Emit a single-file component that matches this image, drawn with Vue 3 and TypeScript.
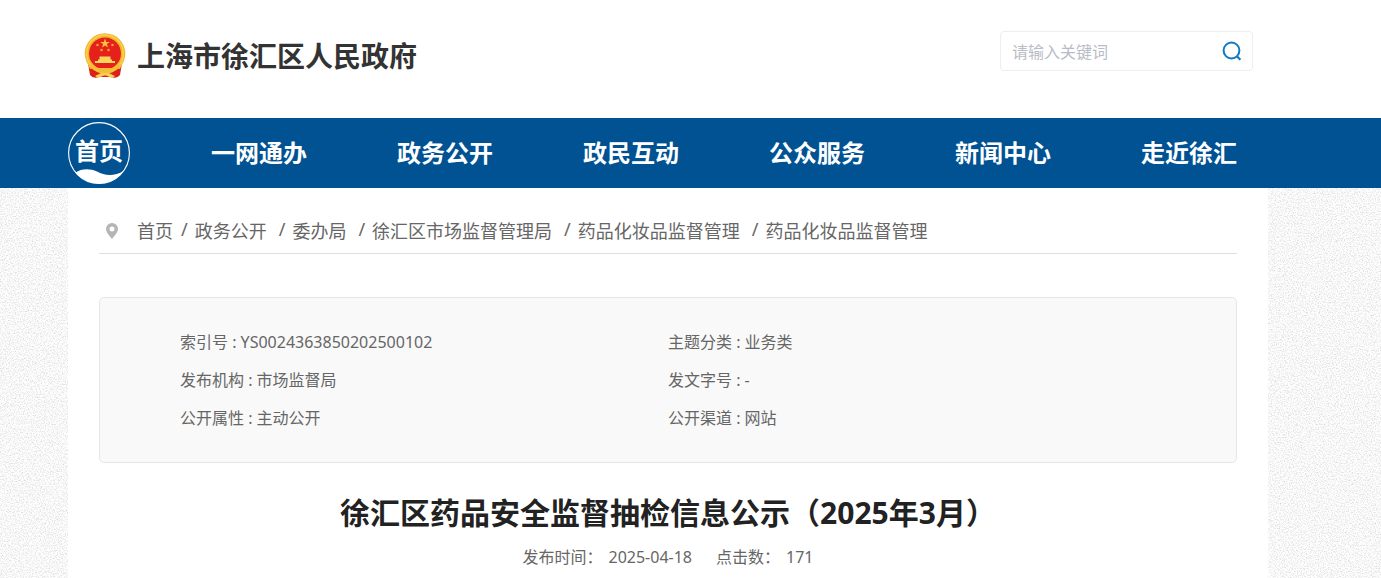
<script setup lang="ts">
import { ref } from 'vue'

interface InfoItem {
  label: string
  value: string
}

const keyword = ref('')

const navItems: string[] = ['一网通办', '政务公开', '政民互动', '公众服务', '新闻中心', '走近徐汇']

const crumbs: string[] = [
  '首页',
  '政务公开',
  '委办局',
  '徐汇区市场监督管理局',
  '药品化妆品监督管理',
  '药品化妆品监督管理',
]

const infoItems: InfoItem[] = [
  { label: '索引号', value: 'YS0024363850202500102' },
  { label: '主题分类', value: '业务类' },
  { label: '发布机构', value: '市场监督局' },
  { label: '发文字号', value: '-' },
  { label: '公开属性', value: '主动公开' },
  { label: '公开渠道', value: '网站' },
]
</script>

<template>
  <div class="page">
    <header class="header">
      <div class="container header-inner">
        <a class="brand" href="#">
          <svg class="emblem" viewBox="0 0 42 46" aria-hidden="true">
            <path d="M4 30 L6 42 Q9 46 15 44 L27 44 Q33 46 36 42 L38 30 Z" fill="#d9201a" />
            <circle cx="21" cy="20.5" r="20.3" fill="#f0b72e" />
            <circle cx="21" cy="20.5" r="18.4" fill="none" stroke="#fbcf4c" stroke-width="1.6" />
            <circle cx="21" cy="20.5" r="16" fill="#e6201b" />
            <path d="M21 5.5 L22.2 9 H25.8 L22.9 11.1 L24 14.6 L21 12.5 L18 14.6 L19.1 11.1 L16.2 9 H19.8 Z" fill="#f8c23a" />
            <g fill="#f0a02d">
              <circle cx="13.5" cy="12" r="1.3" />
              <circle cx="28.5" cy="12" r="1.3" />
              <circle cx="17.5" cy="17" r="1.3" />
              <circle cx="24.5" cy="17" r="1.3" />
            </g>
            <path d="M15.5 23.5 H26.5 V26.5 H28 V28 H31 V30 H11 V28 H14 V26.5 H15.5 Z" fill="#fbd65a" />
            <path d="M4 31 Q9 32 12 34 Q17 38 21 38 Q25 38 30 34 Q33 32 38 31 L36 36 Q31 34 26 40 H16 Q11 34 6 36 Z" fill="#f3bd36" />
            <path d="M11 35 H31 L27 39 H15 Z" fill="#f3bd36" />
            <path d="M6 37 Q11 37 15 41 H27 Q31 37 36 37 L35 42 Q30 43 27 41 H15 Q12 43 7 42 Z" fill="#e01f1a" />
            <path d="M11 43 L17 40 H25 L31 43 L28 45 L22 42.5 H20 L14 45 Z" fill="#f8ce50" />
          </svg>
          <span class="brand-name">上海市徐汇区人民政府</span>
        </a>
        <form class="search" role="search" @submit.prevent>
          <input v-model="keyword" class="search-input" type="text" placeholder="请输入关键词" aria-label="请输入关键词" />
          <button class="search-button" type="submit" aria-label="搜索">
            <svg viewBox="0 0 20 20" width="20" height="20" fill="none" stroke="#0f7ac2" stroke-width="2">
              <circle cx="9.5" cy="9.5" r="7.9" />
              <path d="M14.6 15 L18.4 18.8" stroke-width="2.2" />
            </svg>
          </button>
        </form>
      </div>
    </header>

    <nav class="nav">
      <div class="container nav-inner">
        <a class="nav-home" href="#">
          <svg class="nav-ring" viewBox="0 0 62 62" aria-hidden="true">
            <circle cx="31" cy="31" r="30.4" fill="none" stroke="#fff" stroke-width="1.1" />
            <path d="M7.5 50.5 C13 46.5 22 46 29 49.5 C37 54 46 54.5 56 49 A30.8 30.8 0 0 1 7.5 50.5 Z" fill="#fff" />
          </svg>
          <span class="nav-home-text">首页</span>
        </a>
        <ul class="nav-list">
          <li v-for="item in navItems" :key="item">
            <a href="#">{{ item }}</a>
          </li>
        </ul>
      </div>
    </nav>

    <div class="body">
      <svg class="texture" aria-hidden="true">
        <filter id="grain" x="0" y="0" width="100%" height="100%" color-interpolation-filters="sRGB">
          <feTurbulence type="fractalNoise" baseFrequency="0.77" numOctaves="3" seed="7" />
          <feColorMatrix
            values="0.32 0 0 0 0.81
                    0.32 0 0 0 0.81
                    0.32 0 0 0 0.81
                    0 0 0 0 1"
          />
        </filter>
        <rect width="100%" height="100%" filter="url(#grain)" />
      </svg>
      <main class="container content">
        <nav class="crumbs">
          <svg class="pin" viewBox="0 0 12 16" aria-hidden="true">
            <path
              fill="#b5b5b5"
              fill-rule="evenodd"
              d="M6 0 A6 6 0 0 1 12 6 C12 9.5 8.5 12.5 6 16 C3.5 12.5 0 9.5 0 6 A6 6 0 0 1 6 0 Z M6 3.6 A2.5 2.5 0 1 0 6 8.6 A2.5 2.5 0 1 0 6 3.6 Z"
            />
          </svg>
          <ol class="crumb-list">
            <li v-for="(crumb, i) in crumbs" :key="i">
              <span v-if="i > 0" class="slash">/</span>
              <a href="#">{{ crumb }}</a>
            </li>
          </ol>
        </nav>

        <dl class="info">
          <div v-for="item in infoItems" :key="item.label" class="info-item">
            <dt>{{ item.label }} :&nbsp;</dt>
            <dd>{{ item.value }}</dd>
          </div>
        </dl>

        <h1 class="title">徐汇区药品安全监督抽检信息公示（2025年3月）</h1>
        <p class="meta">
          <span>发布时间：<time datetime="2025-04-18">2025-04-18</time></span>
          <span>点击数：<b>171</b></span>
        </p>
      </main>
    </div>
  </div>
</template>

<style>
body {
  margin: 0;
  overflow: hidden;
}
</style>

<style scoped>
.page {
  min-height: 100vh;
  display: flex;
  flex-direction: column;
  font-family: 'Noto Sans', 'Noto Sans CJK SC', sans-serif;
  font-size: 16px;
  color: #666;
  background: #fff;
}

a {
  color: inherit;
  text-decoration: none;
}

ul,
ol,
dl,
dd,
p {
  margin: 0;
  padding: 0;
  list-style: none;
}

.header,
.nav,
.body {
  padding-right: 45px;
}

.container {
  max-width: 1200px;
  margin: 0 auto;
  box-sizing: border-box;
}

.header-inner {
  display: flex;
  justify-content: space-between;
  align-items: flex-start;
  height: 118px;
  padding: 31px 15px 0 16px;
}

.brand {
  display: flex;
  align-items: center;
  gap: 11px;
  height: 50px;
}

.emblem {
  width: 42px;
  height: 46px;
}

.brand-name {
  font-size: 28px;
  line-height: 50px;
  font-weight: 700;
  color: #333;
}

.search {
  display: flex;
  align-items: center;
  width: 253px;
  height: 40px;
  box-sizing: border-box;
  padding: 0 10px 0 11px;
  border: 1px solid #eee;
  border-radius: 4px;
  background: #fff;
}

.search-input {
  flex: 1;
  min-width: 0;
  padding: 2px 0 0;
  border: 0;
  outline: 0;
  background: none;
  font: inherit;
  color: #333;
}

.search-input::placeholder {
  color: #b8bcc6;
}

.search-button {
  display: flex;
  padding: 0;
  border: 0;
  background: none;
  cursor: pointer;
}

.nav {
  background: #005293;
  color: #fff;
  font-size: 24px;
  font-weight: 700;
}

.nav-inner {
  display: flex;
  height: 70px;
}

.nav-home {
  position: relative;
  width: 62px;
  height: 62px;
  margin-top: 4px;
  text-align: center;
  line-height: 58px;
}

.nav-ring {
  position: absolute;
  inset: 0;
}

.nav-home-text {
  position: relative;
}

.nav-list {
  flex: 1;
  display: flex;
  margin: 0 -14px 0 36px;
}

.nav-list li {
  flex: 1;
  text-align: center;
  line-height: 70px;
}

.body {
  position: relative;
  flex: 1;
  display: flex;
  flex-direction: column;
  background: #f5f5f5;
}

.texture {
  position: absolute;
  inset: 0;
  width: 100%;
  height: 100%;
}

.content {
  position: relative;
  flex: 1;
  width: 100%;
  padding: 20px 31px 0;
  background: #fff;
}

.crumbs {
  display: flex;
  align-items: center;
  padding: 0 0 0 7px;
  height: 45px;
  border-bottom: 1px solid #ddd;
  font-size: 18px;
}

.pin {
  width: 12px;
  height: 16px;
  margin-right: 19px;
}

.crumb-list {
  display: flex;
  padding-bottom: 2px;
  white-space: nowrap;
}

.crumb-list li {
  display: flex;
}

.slash {
  margin: 0 7px 0 12px;
}

.crumb-list li:first-child + li .slash {
  margin-left: 8px;
}

.info {
  display: grid;
  grid-template-columns: 1fr 1fr;
  margin-top: 43px;
  padding: 25px 80px;
  border: 1px solid #e6e6e6;
  border-radius: 5px;
  background: #f9f9f9;
}

.info-item {
  display: flex;
  line-height: 38px;
}

.title {
  margin: 29px 0 0;
  text-align: center;
  font-size: 30px;
  line-height: 42px;
  font-weight: 700;
  color: #222;
}

.meta {
  display: flex;
  justify-content: center;
  gap: 24px;
  margin-top: 11px;
  line-height: 24px;
}

.meta time,
.meta b {
  margin-left: 6px;
  font-weight: 400;
}
</style>
